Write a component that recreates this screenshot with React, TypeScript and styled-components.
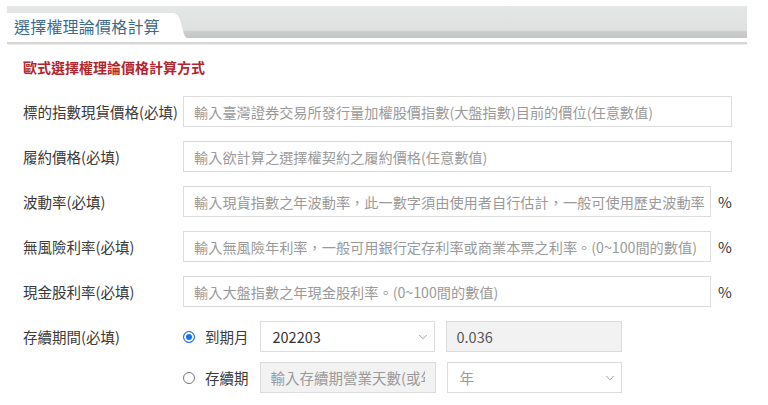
import React, { useState } from "react";
import styled, { createGlobalStyle } from "styled-components";
import { ChevronDown } from "lucide-react";

const GlobalStyle = createGlobalStyle`
  body {
    margin: 0;
    background: #fff;
    font-family: "Noto Sans CJK TC", "Noto Sans", "Liberation Sans", sans-serif;
    color: #333;
  }
`;

const fields = [
  { label: "標的指數現貨價格(必填)", placeholder: "輸入臺灣證券交易所發行量加權股價指數(大盤指數)目前的價位(任意數值)", unit: false },
  { label: "履約價格(必填)", placeholder: "輸入欲計算之選擇權契約之履約價格(任意數值)", unit: false },
  { label: "波動率(必填)", placeholder: "輸入現貨指數之年波動率，此一數字須由使用者自行估計，一般可使用歷史波動率", unit: true },
  { label: "無風險利率(必填)", placeholder: "輸入無風險年利率，一般可用銀行定存利率或商業本票之利率。(0~100間的數值)", unit: true },
  { label: "現金股利率(必填)", placeholder: "輸入大盤指數之年現金股利率。(0~100間的數值)", unit: true },
];

const App: React.FC = () => {
  const [mode, setMode] = useState<"month" | "days">("month");

  return (
    <>
      <GlobalStyle />
      <Page>
        <Header>
          <TabBar>
            <Tab>選擇權理論價格計算</Tab>
            <TabCurve viewBox="0 0 18 25" preserveAspectRatio="none">
              <path d="M0 0 L2 0 C9 0 10 6 12 14 C14 22 15 25 18 25 L0 25 Z" fill="#fff" />
            </TabCurve>
          </TabBar>
          <HeaderLine />
        </Header>

        <Form>
          <Subtitle>歐式選擇權理論價格計算方式</Subtitle>
          {fields.map((f) => (
            <Row key={f.label}>
              <Label>{f.label}</Label>
              <TextInput placeholder={f.placeholder} $wide={!f.unit} />
              {f.unit && <Unit>%</Unit>}
            </Row>
          ))}

          <Row $align="flex-start">
            <Label>存續期間(必填)</Label>
            <PeriodGroup>
              <PeriodLine>
                <RadioLabel onClick={() => setMode("month")}>
                  <Radio $checked={mode === "month"} />
                  到期月
                </RadioLabel>
                <SelectWrap>
                  <Select defaultValue="202203">
                    <option value="202203">202203</option>
                    <option value="202204">202204</option>
                  </Select>
                  <Chevron size={14} strokeWidth={1.4} />
                </SelectWrap>
                <SmallInput value="0.036" readOnly $disabled />
              </PeriodLine>
              <PeriodLine>
                <RadioLabel onClick={() => setMode("days")}>
                  <Radio $checked={mode === "days"} />
                  存續期
                </RadioLabel>
                <SmallInput placeholder="輸入存續期營業天數(或年" $disabled={mode !== "days"} />
                <SelectWrap>
                  <Select defaultValue="year" $muted>
                    <option value="year">年</option>
                    <option value="day">天</option>
                  </Select>
                  <Chevron size={14} strokeWidth={1.4} />
                </SelectWrap>
              </PeriodLine>
            </PeriodGroup>
          </Row>
        </Form>
      </Page>
    </>
  );
};

export default App;

const Page = styled.div`
  width: 740px;
  padding: 6px 0 0 7px;
`;

const Header = styled.div`
  display: flex;
  flex-direction: column;
`;

const TabBar = styled.div`
  height: 32px;
  display: flex;
  align-items: flex-end;
  background: linear-gradient(
    to bottom,
    #e5e6e6 0%,
    #dfe0e0 76%,
    #cbcccc 80%,
    #c3c4c4 100%
  );
`;

const Tab = styled.div`
  box-sizing: border-box;
  height: 25px;
  width: 163px;
  background: #fff;
  display: flex;
  align-items: center;
  padding-left: 7px;
  font-size: 16px;
  letter-spacing: 0.2px;
  color: #3e6b8b;
`;

const TabCurve = styled.svg`
  width: 18px;
  height: 25px;
  display: block;
`;

const HeaderLine = styled.div`
  margin-top: 4px;
  height: 2px;
  background: #d6d6d6;
  border-bottom: 1px solid #ececec;
`;

const Form = styled.div`
  display: flex;
  flex-direction: column;
  gap: 14px;
  padding: 12px 0 0 16px;
`;

const Subtitle = styled.div`
  font-size: 14px;
  font-weight: 700;
  color: #b3262d;
  line-height: 20px;
  margin-bottom: 5px;
`;

const Row = styled.div<{ $align?: string }>`
  display: flex;
  align-items: ${(p) => p.$align || "center"};
`;

const Label = styled.div`
  width: 160px;
  flex: none;
  font-size: 14.5px;
  color: #3a3a3a;
  line-height: 31px;
`;

const TextInput = styled.input<{ $wide?: boolean }>`
  width: ${(p) => (p.$wide ? "549px" : "528px")};
  height: 31px;
  box-sizing: border-box;
  border: 1px solid #dcdcdc;
  padding: 0 2px 0 10px;
  font-family: inherit;
  font-size: 14.2px;
  color: #333;
  outline: none;
  &::placeholder {
    color: #9a9a9a;
  }
`;

const Unit = styled.div`
  width: 21px;
  padding-left: 7px;
  font-size: 15px;
  color: #333;
`;

const PeriodGroup = styled.div`
  display: flex;
  flex-direction: column;
  gap: 10px;
`;

const PeriodLine = styled.div`
  display: flex;
  align-items: center;
  gap: 11px;
`;

const RadioLabel = styled.label`
  display: flex;
  align-items: center;
  gap: 10px;
  flex: none;
  white-space: nowrap;
  font-size: 14.5px;
  color: #3a3a3a;
  cursor: pointer;
`;

const Radio = styled.span<{ $checked: boolean }>`
  width: 12px;
  height: 12px;
  box-sizing: border-box;
  border-radius: 50%;
  border: 1px solid ${(p) => (p.$checked ? "#1a73e8" : "#767676")};
  background: ${(p) => (p.$checked ? "#1a73e8" : "#fff")};
  box-shadow: ${(p) => (p.$checked ? "inset 0 0 0 2px #fff" : "none")};
  flex: none;
`;

const SelectWrap = styled.div`
  position: relative;
  width: 175px;
`;

const Select = styled.select<{ $muted?: boolean }>`
  width: 100%;
  height: 31px;
  appearance: none;
  border: 1px solid #dcdcdc;
  background: #fff;
  padding: 0 12px;
  font-family: inherit;
  font-size: 14.5px;
  color: ${(p) => (p.$muted ? "#9a9a9a" : "#333")};
  outline: none;
`;

const Chevron = styled(ChevronDown)`
  position: absolute;
  right: 5px;
  top: 9px;
  color: #888;
  pointer-events: none;
`;

const SmallInput = styled.input<{ $disabled?: boolean }>`
  width: 176px;
  height: 31px;
  box-sizing: border-box;
  border: 1px solid #dcdcdc;
  background: ${(p) => (p.$disabled ? "#f2f2f2" : "#fff")};
  padding: 0 10px;
  font-family: inherit;
  font-size: 14.5px;
  color: #555;
  outline: none;
  &::placeholder {
    color: #9a9a9a;
  }
`;
